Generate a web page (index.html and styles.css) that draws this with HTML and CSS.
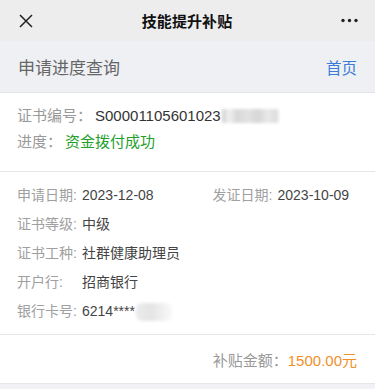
FILE: index.html
```html
<!DOCTYPE html>
<html lang="zh-CN">
<head>
<meta charset="utf-8">
<title>技能提升补贴</title>
<link rel="stylesheet" href="styles.css">
</head>
<body>
<div class="page">
  <header class="navbar">
    <svg class="nav-close" width="14" height="14" viewBox="0 0 14 14"><path d="M1 1 L13 13 M13 1 L1 13" stroke="#222" stroke-width="1.5" fill="none"/></svg>
    <div class="nav-title">技能提升补贴</div>
    <svg class="nav-more" width="17" height="5" viewBox="0 0 17 5"><circle cx="2" cy="2.5" r="1.7" fill="#222"/><circle cx="8.5" cy="2.5" r="1.7" fill="#222"/><circle cx="15" cy="2.5" r="1.7" fill="#222"/></svg>
  </header>

  <div class="subhead">
    <span class="subhead-title">申请进度查询</span>
    <span class="subhead-link">首页</span>
  </div>

  <section class="summary">
    <div class="sum-row"><span class="sum-label">证书编号：</span><span class="sum-value">S00001105601023</span><span class="mask mask-cert"></span></div>
    <div class="sum-row"><span class="sum-label">进度：</span><span class="sum-status">资金拨付成功</span></div>
  </section>

  <section class="details">
    <div class="dates">
      <div class="item"><span class="label">申请日期:</span><span class="value">2023-12-08</span></div>
      <div class="item"><span class="label">发证日期:</span><span class="value">2023-10-09</span></div>
    </div>
    <div class="item"><span class="label">证书等级:</span><span class="value">中级</span></div>
    <div class="item"><span class="label">证书工种:</span><span class="value">社群健康助理员</span></div>
    <div class="item"><span class="label">开户行:</span><span class="value">招商银行</span></div>
    <div class="item"><span class="label">银行卡号:</span><span class="value">6214****</span><span class="mask mask-card"></span></div>
  </section>

  <section class="amount">
    <span class="amount-label">补贴金额：</span><span class="amount-value">1500.00元</span>
  </section>

  <div class="footer-gap"></div>
</div>
</body>
</html>
```

FILE: styles.css
```css
* { box-sizing: border-box; }
html, body { margin: 0; padding: 0; }
body {
  font-family: "Liberation Sans", "Noto Sans CJK SC", sans-serif;
  background: #f2f2f6;
  color: #333;
}
.page { width: 375px; }

.navbar {
  height: 41px;
  background: #ededed;
  display: flex;
  align-items: center;
  justify-content: space-between;
  padding: 0 17px 0 19px;
}
.nav-close { display: block; }
.nav-title {
  font-size: 15px;
  font-weight: 600;
  color: #111;
  letter-spacing: 0.1px;
}
.nav-more { display: block; }

.subhead {
  height: 52px;
  background: #eff0f4;
  border-bottom: 1px solid #e4e4e8;
  display: flex;
  align-items: center;
  justify-content: space-between;
  padding: 0 18px 0 18px;
}
.subhead-title { font-size: 17px; color: #666; }
.subhead-link { font-size: 15.5px; color: #3a7cd6; }

.summary {
  background: #fff;
  padding: 10px 18px 16px 17px;
  border-bottom: 1px solid #e6e6ea;
}
.sum-row {
  font-size: 15px;
  line-height: 26px;
  display: flex;
  align-items: center;
}
.sum-label { color: #999; }
.sum-value { color: #333; margin-left: 3px; }
.sum-status { color: #23a02c; margin-left: 3px; }

.mask {
  display: inline-block;
  filter: blur(1.6px);
}
.mask-cert {
  width: 58px;
  height: 14px;
  margin-left: 1px;
  background: linear-gradient(90deg, #cfcfcf 0%, #f0f0f0 12%, #d8d8d8 26%, #e2e2e2 45%, #d6d6d6 62%, #e9e9e9 80%, #dcdcdc 94%, #fff 100%);
}
.mask-card {
  width: 36px;
  height: 18px;
  margin-left: 1px;
  border-radius: 6px;
  background: linear-gradient(90deg, #ececec 0%, #e4e4e4 40%, #f0f0f0 75%, #fafafa 100%);
}

.details {
  background: #fff;
  padding: 9px 18px 8px 17px;
  border-bottom: 1px solid #e6e6ea;
}
.dates {
  display: grid;
  grid-template-columns: 195.5px 1fr;
}
.item {
  display: flex;
  align-items: center;
  font-size: 14px;
  line-height: 29px;
  white-space: nowrap;
}
.label {
  width: 65px;
  flex: none;
  color: #a0a0a0;
}
.value { color: #444; }

.amount {
  background: #fff;
  height: 49px;
  display: flex;
  align-items: center;
  justify-content: flex-end;
  padding: 0 18px;
  border-bottom: 1px solid #e6e6ea;
  font-size: 15px;
}
.amount-label { color: #999; }
.amount-value { color: #f0902a; }

.footer-gap { height: 10px; background: #f2f2f6; }
```
